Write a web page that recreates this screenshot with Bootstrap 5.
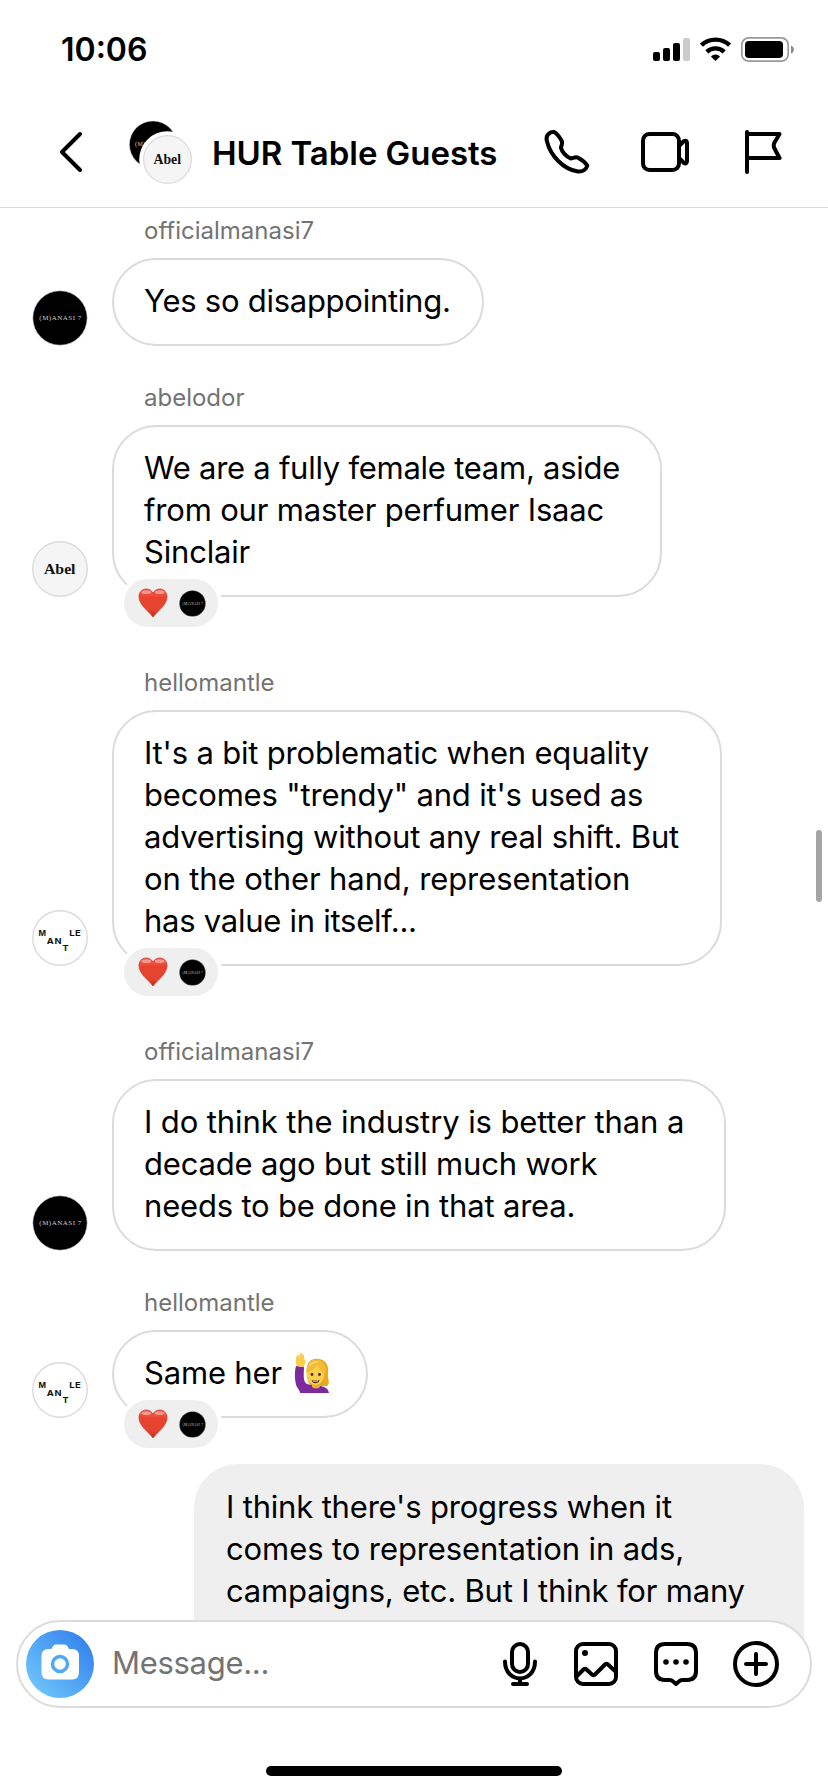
<!DOCTYPE html>
<html lang="en">
<head>
<meta charset="utf-8">
<meta name="viewport" content="width=device-width, initial-scale=1">
<title>HUR Table Guests</title>
<link href="https://cdn.jsdelivr.net/npm/bootstrap@5.3.0/dist/css/bootstrap.min.css" rel="stylesheet">
<style>
  :root { --line: #dbdbdb; --soft: #efefef; --muted: #737373; }
  html, body { height: 1792px; overflow: hidden; }
  body { font-family: Inter, "Liberation Sans", sans-serif; color: #000; background: #fff; }
  svg { display: block; flex: none; }
  .ink { fill: none; stroke: #000; stroke-width: 4; stroke-linecap: round; stroke-linejoin: round; }
  .app { width: 828px; height: 1792px; }
  .status { height: 100px; padding: 0 34px 0 61px; }
  .clock { font-size: 32px; font-weight: 600; line-height: 100px; }
  .topbar { height: 108px; padding: 0 44px 3px 58px; border-bottom: 1px solid var(--line); }
  .title { font-size: 33px; font-weight: 600; line-height: 44px; letter-spacing: -.05px; margin: 1px 0 0 20px; }
  .duo { width: 64px; height: 64px; margin-left: 44px; }
  .thread { height: 1464px; flex: none; overflow: hidden; }
  .who { height: 50px; padding: 7px 0 0 144px; font-size: 24px; line-height: 32px; color: var(--muted); }
  .msg { padding-left: 32px; gap: 24px; margin-bottom: 29px; }
  .msg.reacted { margin-bottom: 63px; }
  .msg.last { margin-bottom: 46px; }
  .bubble { border: 2px solid var(--line); border-radius: 44px; padding: 20px 0 22px 30px; }
  .bubble, .mine { font-size: 31px; line-height: 42px; letter-spacing: -.18px; }
  .bubble span, .mine span { display: block; white-space: nowrap; }
  .bubble .snug { letter-spacing: -.26px; }
  .bubble .airy, .mine .airy { letter-spacing: -.1px; }
  .mine { width: 610px; height: 300px; margin-left: 194px; background: var(--soft); border-radius: 44px; padding: 22px 32px; }
  .react { position: absolute; left: 6px; bottom: -36px; width: 102px; height: 56px; border: 4px solid #fff; border-radius: 28px; background: var(--soft); padding-left: 14px; gap: 11px; }
  .thumb { position: absolute; left: 816px; top: 830px; width: 6px; height: 72px; border-radius: 3px; background: #a5a5a5; }
  .dock { position: relative; height: 172px; flex: none; margin-top: -52px; padding: 0 16px; }
  .composer { height: 88px; border: 2px solid var(--line); border-radius: 44px; background: #fff; padding: 0 30px 0 8px; }
  .hint { font-size: 31px; color: var(--muted); margin-left: 18px; padding-bottom: 2px; line-height: 42px; letter-spacing: -.3px; }
  .homebar { width: 296px; height: 10px; border-radius: 5px; background: #000; margin: 58px auto 0; }
</style>
</head>
<body>
<svg width="0" height="0" class="position-absolute">
  <defs>
    <linearGradient id="blue" x1=".1" y1=".9" x2=".9" y2=".15"><stop offset="0" stop-color="#6ec6fc"/><stop offset="1" stop-color="#3584ec"/></linearGradient>
    <linearGradient id="red" x1="0" y1="0" x2="0" y2="1"><stop offset="0" stop-color="#f4685c"/><stop offset=".3" stop-color="#e8432f"/><stop offset=".75" stop-color="#e4442f"/><stop offset="1" stop-color="#b72a1c"/></linearGradient>
    <symbol id="manasi" viewBox="0 0 56 56">
      <circle cx="28" cy="28" r="27.2" fill="#000" stroke="#dbdbdb" stroke-width=".6"/>
      <text x="7.3" y="30.2" font-family="Liberation Serif, serif" font-size="7" fill="#ccc" textLength="42">(M)ANASI 7</text>
    </symbol>
    <symbol id="abel" viewBox="0 0 56 56">
      <circle cx="28" cy="28" r="27.3" fill="#f5f5f5" stroke="#dbdbdb" stroke-width="1.4"/>
      <text x="12" y="33" font-family="Liberation Serif, serif" font-weight="700" font-size="15.500" fill="#111" textLength="31.500" lengthAdjust="spacingAndGlyphs">Abel</text>
    </symbol>
    <symbol id="mantle" viewBox="0 0 56 56">
      <circle cx="28" cy="28" r="27.3" fill="#fff" stroke="#dbdbdb" stroke-width="1.4"/>
      <g font-family="Inter, sans-serif" font-weight="700" font-size="7.400" fill="#111">
        <text x="6.500" y="26.400" textLength="7.500" lengthAdjust="spacingAndGlyphs">M</text><text x="14.800" y="33.600" textLength="7" lengthAdjust="spacingAndGlyphs">A</text><text x="22.500" y="33.600" textLength="7" lengthAdjust="spacingAndGlyphs">N</text>
        <text x="30.600" y="40.700" textLength="6" lengthAdjust="spacingAndGlyphs">T</text><text x="37.200" y="26.400" textLength="5.400" lengthAdjust="spacingAndGlyphs">L</text><text x="43" y="26.400" textLength="5.800" lengthAdjust="spacingAndGlyphs">E</text>
      </g>
    </symbol>
    <symbol id="heart" viewBox="0 0 30 30">
      <path d="M15 29C11 23.500 1 17 1 8.600C1 4.200 4.200 1 8.200 1C11.300 1 13.800 2.700 15 5.200C16.200 2.700 18.700 1 21.800 1C25.800 1 29 4.200 29 8.600C29 17 19 23.500 15 29Z" fill="url(#red)" stroke="#cf3526" stroke-width=".8"/>
      <ellipse cx="8.300" cy="4.200" rx="4.800" ry="1.800" fill="#ffb9ad" opacity=".65"/><ellipse cx="21.700" cy="4.200" rx="4.800" ry="1.800" fill="#ffb9ad" opacity=".65"/>
    </symbol>
  </defs>
</svg>

<div class="app d-flex flex-column position-relative">
  <div class="status d-flex align-items-center justify-content-between flex-shrink-0">
    <div class="clock">10:06</div>
    <svg width="144" height="28" viewBox="650 36 144 28">
      <g><rect x="653" y="52" width="7" height="9" rx="2"/><rect x="663" y="48" width="7" height="13" rx="2"/><rect x="673" y="43" width="7" height="18" rx="2"/><rect x="683" y="38" width="7" height="23" rx="2" fill="#ccc"/></g>
      <g fill="none" stroke="#000" stroke-width="4.400"><path d="M701.400 45.200a20.500 20.500 0 0 1 28.200 0"/><path d="M706.800 51.800a12.800 12.800 0 0 1 17.400 0"/></g>
      <path d="M715.500 61l-4.600-4.500a6.500 6.500 0 0 1 9.200 0z"/>
      <rect x="741.800" y="37.800" width="46.400" height="23.400" rx="7" fill="none" stroke="#999" stroke-width="1.700"/>
      <rect x="745" y="41" width="38" height="17" rx="4"/>
      <path d="M791 45.500c3.800 1.400 3.800 6.800 0 8.200z" fill="#8a8a8a"/>
    </svg>
  </div>

  <nav class="topbar d-flex align-items-center flex-shrink-0">
    <svg width="26" height="42" viewBox="58 131 26 42"><path class="ink" d="M80 134L62 152L80 170"/></svg>
    <svg class="duo" viewBox="128 120 64 64">
      <svg x="128.700" y="120.200" width="48.600" height="48.600"><use href="#manasi"/></svg>
      <circle cx="167.500" cy="159.500" r="28.300" fill="#fff"/>
      <svg x="143" y="135" width="49" height="49"><use href="#abel"/></svg>
    </svg>
    <div class="title text-nowrap">HUR Table Guests</div>
    <svg class="ms-auto" width="240" height="48" viewBox="544 128 240 48">
      <g class="ink">
        <path d="M550.500 132.500C547.500 134 545.800 137 547 141.500C550.500 156 563.500 169 577 171.300C583 172.300 586.500 169 587.300 165.500C585 162 581.500 159.500 578 157.700C575 156.500 573 158.500 570.500 158.400C566.500 157 562 152 561 148C560.800 145.500 563.300 144 561.500 140.500C559.500 137 557 133.500 554 132C552.500 131.700 551.500 132 550.500 132.500Z"/>
        <rect x="643" y="134" width="36" height="36" rx="6.500"/><path d="M680 145L684 141C686 140 687 141.500 687 143V161C687 163 686 164 684 163L680 159"/>
        <path d="M747 132V172M747 135.500Q747 134 750 134H779.500L774.500 142.500Q773 145.500 774.500 148.500L779.500 158H750Q747 158 747 160"/>
      </g>
    </svg>
  </nav>

  <main class="thread">
    <div class="who">officialmanasi7</div>
    <div class="msg d-flex align-items-end">
      <svg width="56" height="56"><use href="#manasi"/></svg>
      <div class="bubble" style="width:372px"><span class="snug">Yes so disappointing.</span></div>
    </div>
    <div class="who">abelodor</div>
    <div class="msg reacted d-flex align-items-end">
      <svg width="56" height="56"><use href="#abel"/></svg>
      <div class="bubble position-relative" style="width:550px"><span class="snug">We are a fully female team, aside</span><span>from our master perfumer Isaac</span><span>Sinclair</span>
        <div class="react d-flex align-items-center"><svg width="30" height="30"><use href="#heart"/></svg><svg width="27" height="27" viewBox="0 0 56 56"><use href="#manasi"/></svg></div></div>
    </div>
    <div class="who">hellomantle</div>
    <div class="msg reacted d-flex align-items-end">
      <svg width="56" height="56"><use href="#mantle"/></svg>
      <div class="bubble position-relative" style="width:610px"><span>It's a bit problematic when equality</span><span>becomes "trendy" and it's used as</span><span>advertising without any real shift. But</span><span class="airy">on the other hand, representation</span><span class="snug">has value in itself...</span>
        <div class="react d-flex align-items-center"><svg width="30" height="30"><use href="#heart"/></svg><svg width="27" height="27" viewBox="0 0 56 56"><use href="#manasi"/></svg></div></div>
    </div>
    <div class="who">officialmanasi7</div>
    <div class="msg d-flex align-items-end">
      <svg width="56" height="56"><use href="#manasi"/></svg>
      <div class="bubble" style="width:614px"><span class="airy">I do think the industry is better than a</span><span>decade ago but still much work</span><span>needs to be done in that area.</span></div>
    </div>
    <div class="who">hellomantle</div>
    <div class="msg last d-flex align-items-end">
      <svg width="56" height="56"><use href="#mantle"/></svg>
      <div class="bubble position-relative" style="width:256px">
        <div class="d-flex align-items-center"><span>Same her</span>
          <svg class="ms-auto" style="margin-right:36px" width="36" height="42" viewBox="0 0 36 42">
            <path d="M13 15C14 8 20 6 25 7C32 8 35 14 34 21C33 26 37 31 33 34H17C13 30 12 23 13 15Z" fill="#eba91f"/>
            <path d="M2 14C0 21 1 31 3 35C5 38 6 39 6 41H35C34 36 30 34 25 34C18 33 12 33 11 30C9 26 10 20 10 15Z" fill="#7d2b9c"/>
            <path d="M3 14C1 10 2 6 3 3C4 2 4.500 3 5 5L6 1C7 0 8 1 8 3L9 2C10 2 10 4 10 6L11 8C12 11 10 13 10 15Z" fill="#fbcd4b"/>
            <path d="M18 31h8v4q-4 3-8 0z" fill="#e9ae35"/>
            <ellipse cx="21.500" cy="22" rx="8.800" ry="11" fill="#fcd04c"/>
            <path d="M12.500 21C12 10 19 6 25 8C30 9 33 15 31.500 22C28 20 25 17 23 13C21 17 17 19 12.500 21Z" fill="#f3bb38"/>
            <path d="M14 15C17 9.500 22 8.500 26 10C22 10.500 17 12 14 15Z" fill="#fbdc72"/>
            <circle cx="18" cy="22.500" r="1.400" fill="#4a2a12"/><circle cx="25.500" cy="22.500" r="1.400" fill="#4a2a12"/>
            <path d="M17.500 28Q21.500 29.200 25.500 28Q24.500 31.200 21.500 31.200Q18.500 31.200 17.500 28Z" fill="#5b2c14"/><path d="M18.800 28.600Q21.500 29.200 24.200 28.600L23.800 29.500H19.200Z" fill="#fff"/>
          </svg></div>
        <div class="react d-flex align-items-center"><svg width="30" height="30"><use href="#heart"/></svg><svg width="27" height="27" viewBox="0 0 56 56"><use href="#manasi"/></svg></div></div>
    </div>
    <div class="mine"><span>I think there's progress when it</span><span class="airy">comes to representation in ads,</span><span>campaigns, etc. But I think for many</span></div>
  </main>

  <footer class="dock">
    <div class="composer d-flex align-items-center">
      <svg width="68" height="68" viewBox="26 1630 68 68">
        <circle cx="60" cy="1664" r="34" fill="url(#blue)"/>
        <path d="M41.500 1656q0-7 7-7h3q1.500-4.500 4.500-4.500h8q3.500 0 5 4.500h3q7 0 7 7v16q0 7.500-7 7.500h-23.500q-7 0-7-7.500z" fill="#fff"/>
        <circle cx="60" cy="1664" r="7.500" fill="none" stroke="#4fa8f5" stroke-width="3.400"/>
      </svg>
      <div class="hint">Message...</div>
      <svg class="ms-auto" width="280" height="52" viewBox="500 1638 280 52">
        <g class="ink">
          <rect x="512" y="1644" width="16" height="28" rx="8"/><path d="M505 1661.500C505 1684 535 1684 535 1661.500M520 1679V1683M513 1684H527"/>
          <rect x="576" y="1644" width="40" height="40" rx="7"/><path d="M577 1676L583.500 1669.500Q585 1668 586.500 1669.500L592 1674.500Q593.500 1676 595 1674.500L605 1664.500Q606.500 1663 608 1664.500L615.500 1671.500"/>
          <path d="M665 1644H687Q696 1644 696 1653V1671Q696 1680 687 1680H682Q680.500 1680 679.500 1681L676 1684L672.500 1681Q671.500 1680 670 1680H665Q656 1680 656 1671V1653Q656 1644 665 1644Z"/>
          <circle cx="756" cy="1664" r="21"/><path d="M746 1664H766M756 1654V1674"/>
        </g>
        <circle cx="585" cy="1653" r="3"/><circle cx="666" cy="1662" r="2.800"/><circle cx="676" cy="1662" r="2.800"/><circle cx="686" cy="1662" r="2.800"/>
      </svg>
    </div>
    <div class="homebar"></div>
  </footer>
  <div class="thumb"></div>
</div>
<script src="https://cdn.jsdelivr.net/npm/bootstrap@5.3.0/dist/js/bootstrap.bundle.min.js"></script>
</body>
</html>
